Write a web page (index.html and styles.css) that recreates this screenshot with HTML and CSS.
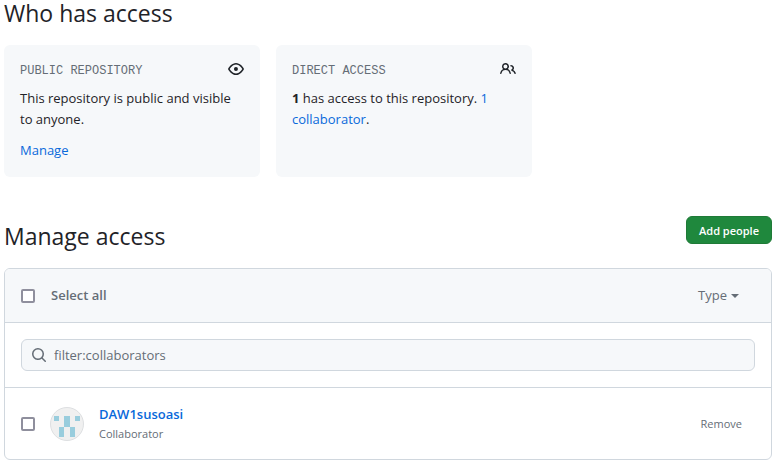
FILE: index.html
```html
<!DOCTYPE html>
<html lang="en">
<head>
<meta charset="utf-8">
<meta name="viewport" content="width=device-width, initial-scale=1">
<title>Manage access</title>
<link rel="stylesheet" href="styles.css">
</head>
<body>
<main class="page">
  <section>
    <h2 class="heading">Who has access</h2>
    <div class="cards">
      <article class="card">
        <header class="card-head">
          <h3 class="card-title">Public repository</h3>
          <svg class="icon" viewBox="0 0 16 16" aria-hidden="true"><path d="M8 2c1.981 0 3.671.992 4.933 2.078 1.27 1.091 2.187 2.345 2.637 3.023a1.62 1.62 0 0 1 0 1.798c-.45.678-1.367 1.932-2.637 3.023C11.67 13.008 9.981 14 8 14c-1.981 0-3.671-.992-4.933-2.078C1.797 10.83.88 9.576.43 8.898a1.62 1.62 0 0 1 0-1.798c.45-.677 1.367-1.931 2.637-3.022C4.33 2.992 6.019 2 8 2ZM1.679 7.932a.12.12 0 0 0 0 .136c.411.622 1.241 1.75 2.366 2.717C5.176 11.758 6.527 12.5 8 12.5c1.473 0 2.825-.742 3.955-1.715 1.124-.967 1.954-2.096 2.366-2.717a.12.12 0 0 0 0-.136c-.412-.621-1.242-1.75-2.366-2.717C10.824 4.242 9.473 3.5 8 3.5c-1.473 0-2.825.742-3.955 1.715-1.124.967-1.954 2.096-2.366 2.717ZM8 10a2 2 0 1 1-.001-3.999A2 2 0 0 1 8 10Z"/></svg>
        </header>
        <p class="card-text">This repository is public and visible to anyone.</p>
        <p class="card-action"><a href="#manage">Manage</a></p>
      </article>
      <article class="card">
        <header class="card-head">
          <h3 class="card-title">Direct access</h3>
          <svg class="icon" viewBox="0 0 16 16" aria-hidden="true"><path d="M2 5.5a3.5 3.5 0 1 1 5.898 2.549 5.508 5.508 0 0 1 3.034 4.084.75.75 0 1 1-1.482.235 4 4 0 0 0-7.9 0 .75.75 0 0 1-1.482-.236A5.507 5.507 0 0 1 3.102 8.05 3.493 3.493 0 0 1 2 5.5ZM11 4a3.001 3.001 0 0 1 2.22 5.018 5.01 5.01 0 0 1 2.56 3.012.749.749 0 0 1-.885.954.752.752 0 0 1-.549-.514 3.507 3.507 0 0 0-2.522-2.372.75.75 0 0 1-.574-.73v-.352a.75.75 0 0 1 .416-.672A1.5 1.5 0 0 0 11 5.5.75.75 0 0 1 11 4Zm-5.5-.5a2 2 0 1 0-.001 3.999A2 2 0 0 0 5.5 3.5Z"/></svg>
        </header>
        <p class="card-text"><strong>1</strong> has access to this repository. <a href="#collaborators">1 collaborator</a>.</p>
      </article>
    </div>
  </section>

  <section id="manage">
    <div class="section-head">
      <h2 class="heading">Manage access</h2>
      <button class="primary" type="button">Add people</button>
    </div>
    <div class="box" id="collaborators">
      <div class="box-head">
        <label class="select-all"><input class="check" type="checkbox">Select all</label>
        <button class="type" type="button">Type<span class="caret"></span></button>
      </div>
      <div class="filter">
        <label class="search">
          <svg class="icon muted" viewBox="0 0 16 16" aria-hidden="true"><path d="M10.68 11.74a6 6 0 0 1-7.922-8.982 6 6 0 0 1 8.982 7.922l3.04 3.04a.749.749 0 0 1-.326 1.275.749.749 0 0 1-.734-.215ZM11.5 7a4.499 4.499 0 1 0-8.997 0A4.499 4.499 0 0 0 11.5 7Z"/></svg>
          <input class="search-input" type="text" aria-label="Find a collaborator" value="filter:collaborators">
        </label>
      </div>
      <div class="member">
        <input class="check" type="checkbox" aria-label="Select DAW1susoasi">
        <svg class="avatar" viewBox="0 0 34 34" aria-hidden="true"><circle cx="17" cy="17" r="16.5" fill="#f0f0f0" stroke="#dddfe1"/><path fill="#99cddd" d="M4 9h5v5H4zM14 9h6v11h5v10h-5V20h-6v10H9V20h5zM25 9h5v5h-5z"/></svg>
        <div class="identity">
          <a class="name" href="#member">DAW1susoasi</a>
          <span class="role">Collaborator</span>
        </div>
        <button class="remove" type="button">Remove</button>
      </div>
    </div>
  </section>
</main>
</body>
</html>
```
FILE: styles.css
```css
* {
  box-sizing: border-box;
}

body {
  margin: 0;
  background: #fff;
  color: #1f2328;
  font: 13px/21px "Open Sans", "Noto Sans", sans-serif;
}

h2, h3, p {
  margin: 0;
}

a {
  color: #0969da;
  text-decoration: none;
}

button, input {
  margin: 0;
  font: inherit;
}

button {
  padding: 0;
  border: 0;
  background: none;
  color: #656d76;
  cursor: pointer;
}

.page {
  padding: 0 5px 6px 4px;
}

.heading {
  font-size: 23px;
  font-weight: 400;
  line-height: 26px;
}

.cards {
  display: flex;
  gap: 16px;
  margin-top: 19px;
}

.card {
  flex: 0 1 256px;
  min-height: 132px;
  padding: 16px;
  border-radius: 6px;
  background: #f6f8fa;
}

.card-head {
  display: flex;
  justify-content: space-between;
  margin-bottom: 7px;
}

.card-title {
  color: #656d76;
  font: 400 12px/20px "Liberation Mono", monospace;
  text-transform: uppercase;
}

.card-action {
  margin-top: 10px;
}

.icon {
  flex: none;
  width: 16px;
  height: 16px;
  fill: #1f2328;
}

.muted {
  fill: #656d76;
}

.section-head {
  display: flex;
  align-items: flex-start;
  justify-content: space-between;
  margin-top: 39px;
}

.section-head .heading {
  padding-top: 7px;
}

.primary {
  height: 28px;
  padding: 0 12px;
  border: 1px solid #1f7a37;
  border-radius: 6px;
  background: #1f883d;
  color: #fff;
  font-size: 11px;
  font-weight: 600;
}

.box {
  margin-top: 19px;
  border: 1px solid #d0d7de;
  border-radius: 6px;
}

.box-head {
  display: flex;
  align-items: center;
  justify-content: space-between;
  height: 54px;
  padding: 0 32px 0 16px;
  border-bottom: 1px solid #d0d7de;
  border-radius: 5px 5px 0 0;
  background: #f6f8fa;
}

.select-all {
  display: flex;
  align-items: center;
  gap: 16px;
  color: #656d76;
  font-weight: 600;
}

.check {
  flex: none;
  width: 14px;
  height: 14px;
  border: 2px solid #8f8f9d;
  border-radius: 2px;
  background: #fff;
  appearance: none;
}

.check:checked {
  background: #0969da;
}

.type {
  display: flex;
  align-items: center;
  gap: 4px;
}

.caret {
  border: 4px solid transparent;
  border-top-color: #656d76;
  border-bottom: 0;
}

.filter {
  padding: 16px;
  border-bottom: 1px solid #d0d7de;
}

.search {
  display: flex;
  align-items: center;
  gap: 7px;
  height: 32px;
  padding: 0 9px;
  border: 1px solid #d0d7de;
  border-radius: 6px;
  background: #f6f8fa;
}

.search-input {
  flex: 1;
  min-width: 0;
  padding: 0;
  border: 0;
  outline: 0;
  background: none;
  color: #656d76;
}

.member {
  display: flex;
  align-items: center;
  height: 71px;
  padding: 0 29px 0 16px;
}

.avatar {
  flex: none;
  width: 34px;
  height: 34px;
  margin: 0 15px;
}

.identity {
  display: flex;
  flex: 1;
  flex-direction: column;
}

.name {
  align-self: flex-start;
  font-weight: 600;
}

.role {
  color: #656d76;
  font-size: 11px;
  line-height: 18px;
}

.remove {
  font-size: 11px;
}
```
